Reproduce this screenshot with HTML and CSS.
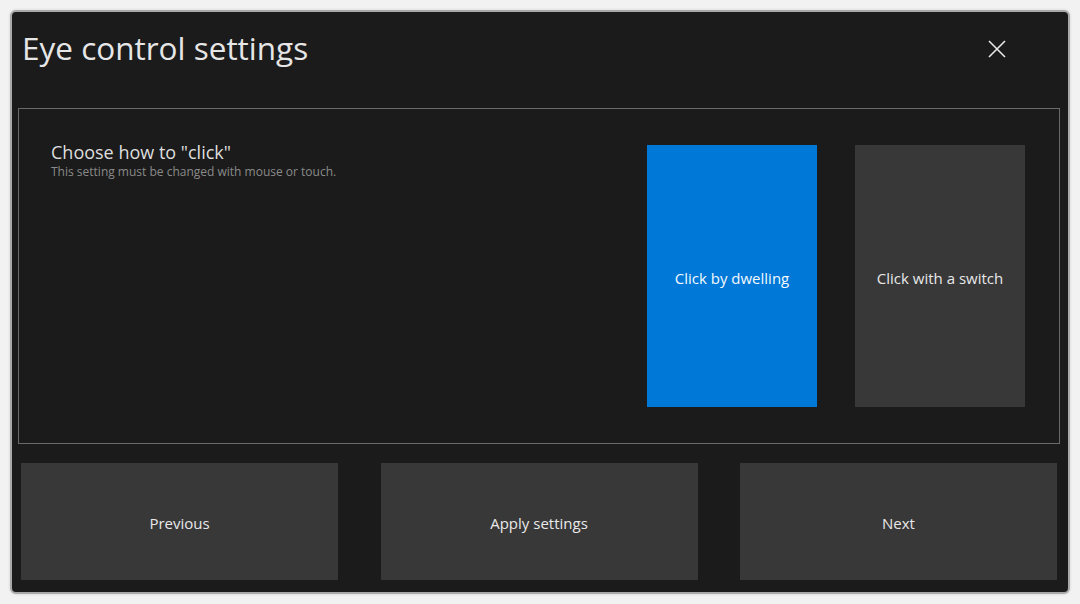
FILE: index.html
```html
<!DOCTYPE html>
<html lang="en">
<head>
<meta charset="utf-8">
<title>Eye control settings</title>
<link rel="stylesheet" href="styles.css">
</head>
<body>
<div class="window">
  <header class="header">
    <h1 class="title">Eye control settings</h1>
    <button class="close" aria-label="Close">
      <svg width="18" height="18" viewBox="0 0 18 18"><path d="M1 1 L17 17 M17 1 L1 17" stroke="#e8e8e8" stroke-width="1.6" fill="none"/></svg>
    </button>
  </header>
  <section class="panel">
    <div class="panel-text">
      <h2 class="heading">Choose how to "click"</h2>
      <p class="note">This setting must be changed with mouse or touch.</p>
    </div>
    <div class="tiles">
      <button class="tile tile-active">Click by dwelling</button>
      <button class="tile">Click with a switch</button>
    </div>
  </section>
  <footer class="footer">
    <button class="nav">Previous</button>
    <button class="nav">Apply settings</button>
    <button class="nav">Next</button>
  </footer>
</div>
</body>
</html>
```
FILE: styles.css
```css
* { box-sizing: border-box; }
html, body { margin: 0; padding: 0; }
body {
  width: 1080px;
  height: 604px;
  background: #f2f2f2;
  font-family: "Open Sans", "Noto Sans", sans-serif;
  padding: 10px;
  overflow: hidden;
}
.window {
  width: 1060px;
  height: 584px;
  border: 2px solid #a9a9a9;
  border-radius: 6px;
  background: #1b1b1b;
  box-shadow: 0 0 3px rgba(0,0,0,0.15);
  display: flex;
  flex-direction: column;
}
.header {
  height: 96px;
  display: flex;
  align-items: flex-start;
  justify-content: space-between;
  padding: 0 62px 0 10px;
}
.title {
  margin: 0;
  padding-top: 15px;
  font-size: 31.5px;
  font-weight: 400;
  line-height: 42px;
  color: #e6e6e6;
}
.close {
  margin-top: 28px;
  padding: 0;
  border: 0;
  background: none;
  width: 18px;
  height: 18px;
  display: flex;
}
.panel {
  height: 336px;
  margin: 0 8px 0 6px;
  border: 1px solid #6a6a6a;
  display: flex;
  padding: 36px 34px 0 32px;
}
.panel-text { flex: 1; margin-top: -5px; }
.heading {
  margin: 0;
  font-size: 18px;
  font-weight: 400;
  line-height: 24px;
  color: #dedede;
}
.note {
  margin: 0;
  font-size: 12px;
  line-height: 16px;
  color: #8a8a8a;
}
.tiles {
  display: flex;
  gap: 38px;
}
.tile, .nav {
  border: 0;
  margin: 0;
  font-family: inherit;
  font-size: 15px;
  color: #e8e8e8;
  background: #383838;
}
.tile {
  width: 170px;
  height: 262px;
  padding: 4px 0 0;
}
.tile-active { background: #0078d7; color: #f4f8fc; }
.footer {
  margin-top: 19px;
  height: 117px;
  padding: 0 11px 0 9px;
  display: grid;
  grid-template-columns: repeat(3, 1fr);
  column-gap: 42.5px;
}
.nav { height: 117px; padding: 2px 0 0; }
```
